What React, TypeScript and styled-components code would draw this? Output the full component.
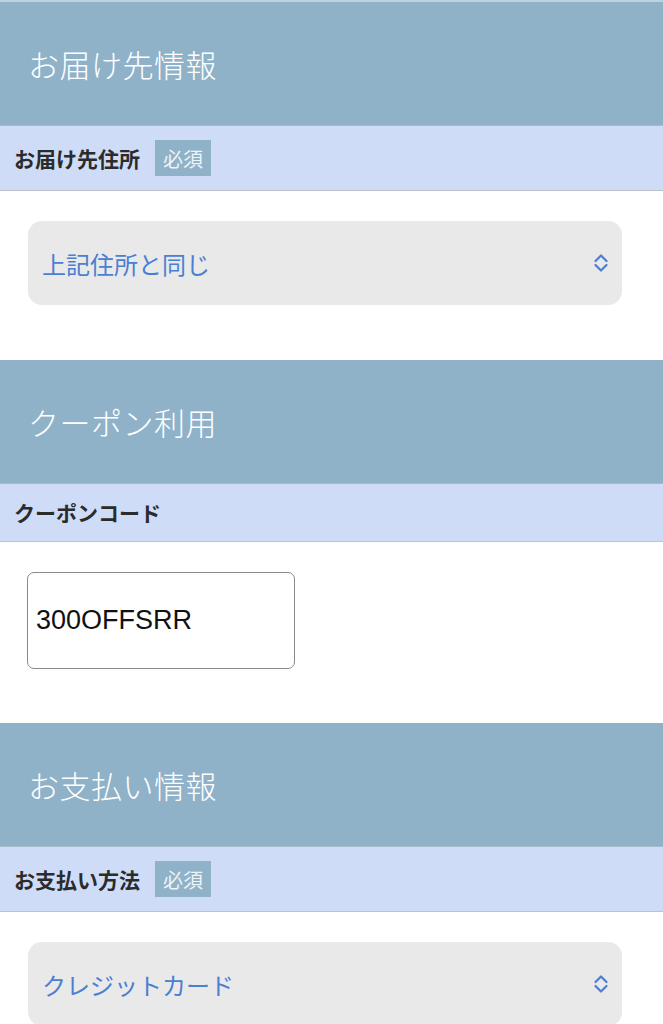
import * as React from "react";
import styled, { createGlobalStyle } from "styled-components";

const headerBlue = "#8fb2c9";
const labelBlue = "#cedcf7";
const linkBlue = "#4a7fd2";

const GlobalStyle = createGlobalStyle`
  * { box-sizing: border-box; }
  body {
    margin: 0;
    background: #ffffff;
    font-family: "Noto Sans CJK JP", "Noto Sans", sans-serif;
  }
`;

const Page = styled.div`
  width: 663px;
  border-top: 2px solid #bdd2dc;
  overflow: hidden;
`;

const SectionHeader = styled.h2`
  margin: 0;
  height: 123px;
  display: flex;
  align-items: center;
  padding-left: 28px;
  background: ${headerBlue};
  color: #ffffff;
  font-size: 31px;
  font-weight: 300;
  letter-spacing: 0.5px;
`;

const LabelRow = styled.div`
  display: flex;
  align-items: center;
  gap: 15px;
  padding: 14px 14px;
  background: ${labelBlue};
  border-top: 1px solid #a7bccb;
  border-bottom: 1px solid #bcc3cc;
`;

const LabelText = styled.span`
  font-size: 21px;
  font-weight: 700;
  line-height: 29px;
  color: #2b2b2b;
`;

const Badge = styled.span`
  display: inline-flex;
  align-items: center;
  height: 36px;
  padding: 0 8px;
  background: ${headerBlue};
  color: #eef3f6;
  font-size: 20px;
  font-weight: 400;
`;

const Body = styled.div<{ $bottom?: number }>`
  padding: 30px 41px ${(p) => p.$bottom ?? 55}px 28px;
`;

const SelectBox = styled.div`
  display: flex;
  align-items: center;
  justify-content: space-between;
  height: 84px;
  padding: 0 12px 0 14px;
  background: #e9e9e9;
  border-radius: 14px;
  color: ${linkBlue};
  font-size: 24px;
`;

const CodeInput = styled.div`
  display: flex;
  align-items: center;
  width: 268px;
  height: 97px;
  margin-left: -1px;
  padding-left: 8px;
  border: 1.5px solid #8a8a8a;
  border-radius: 7px;
  font-family: "Liberation Sans", Arial, sans-serif;
  font-size: 27px;
  color: #111111;
`;

const Chevrons = () => (
  <svg width="18" height="22" viewBox="0 0 18 22" fill="none">
    <path
      d="M3.5 9L9 3.5L14.5 9M3.5 13L9 18.5L14.5 13"
      stroke={linkBlue}
      strokeWidth="2.2"
      strokeLinecap="round"
      strokeLinejoin="round"
    />
  </svg>
);

const Select = ({ value }: { value: string }) => (
  <SelectBox>
    <span>{value}</span>
    <Chevrons />
  </SelectBox>
);

export default function App() {
  return (
    <Page>
      <GlobalStyle />
      <section>
        <SectionHeader>お届け先情報</SectionHeader>
        <LabelRow>
          <LabelText>お届け先住所</LabelText>
          <Badge>必須</Badge>
        </LabelRow>
        <Body>
          <Select value="上記住所と同じ" />
        </Body>
      </section>
      <section>
        <SectionHeader>クーポン利用</SectionHeader>
        <LabelRow>
          <LabelText>クーポンコード</LabelText>
        </LabelRow>
        <Body $bottom={54}>
          <CodeInput>300OFFSRR</CodeInput>
        </Body>
      </section>
      <section>
        <SectionHeader>お支払い情報</SectionHeader>
        <LabelRow>
          <LabelText>お支払い方法</LabelText>
          <Badge>必須</Badge>
        </LabelRow>
        <Body>
          <Select value="クレジットカード" />
        </Body>
      </section>
    </Page>
  );
}
